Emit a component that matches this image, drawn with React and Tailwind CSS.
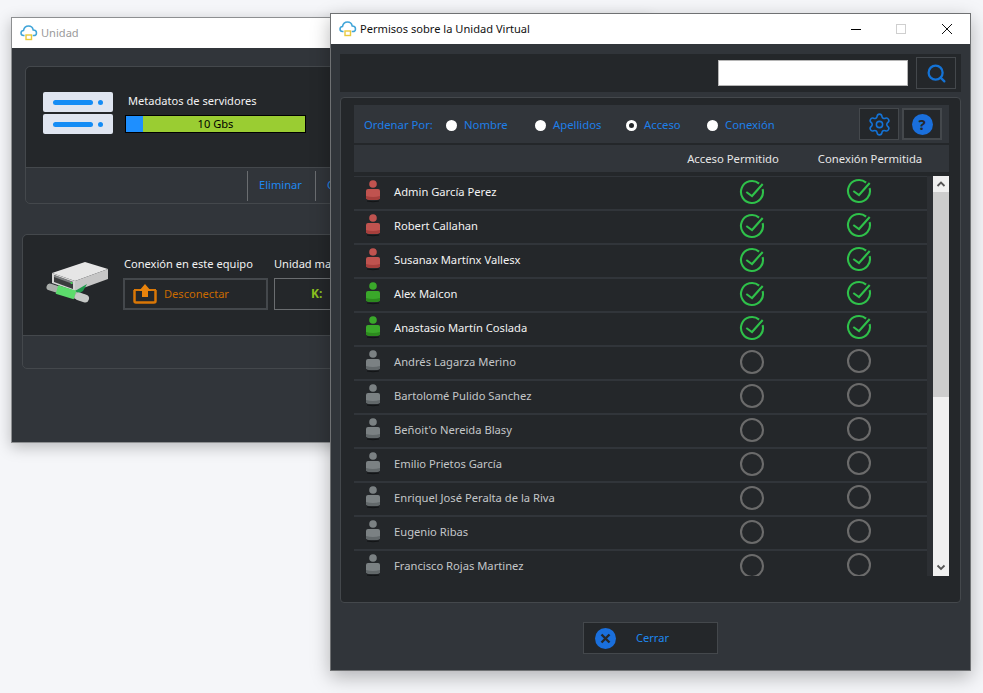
import React from 'react';
import { Search, Settings } from 'lucide-react';

const users = [
  { name: 'Admin García Perez', color: 'red', on: true },
  { name: 'Robert Callahan', color: 'red', on: true },
  { name: 'Susanax Martínx Vallesx', color: 'red', on: true },
  { name: 'Alex Malcon', color: 'green', on: true },
  { name: 'Anastasio Martín Coslada', color: 'green', on: true },
  { name: 'Andrés Lagarza Merino', color: 'gray', on: false },
  { name: 'Bartolomé Pulido Sanchez', color: 'gray', on: false },
  { name: "Beñoit'o Nereida Blasy", color: 'gray', on: false },
  { name: 'Emilio Prietos García', color: 'gray', on: false },
  { name: 'Enriquel José Peralta de la Riva', color: 'gray', on: false },
  { name: 'Eugenio Ribas', color: 'gray', on: false },
  { name: 'Francisco Rojas Martinez', color: 'gray', on: false },
];

const personColors = {
  red: ['#c0534f', '#a63f3c'],
  green: ['#3aa82a', '#2c8a1e'],
  gray: ['#7b8183', '#62686a'],
};

const radios = [
  { label: 'Nombre', width: 'w-[89px]' },
  { label: 'Apellidos', width: 'w-[91px]' },
  { label: 'Acceso', width: 'w-[81px]', selected: true },
  { label: 'Conexión', width: 'w-[80px]' },
];

const CloudLogo = () => (
  <svg width="18" height="16" viewBox="0 0 18 16" fill="none">
    <path d="M4.500 10.500H3.600C2 10.500 1 9.300 1 8c0-1.300 1-2.400 2.500-2.500C4 3 6 1 8.500 1c2.400 0 4.300 1.700 4.700 4 1.900 0 3.300 1.300 3.300 2.900 0 1.500-1.200 2.600-2.800 2.600h-1" stroke="#3fa4d8" strokeWidth="1.500" />
    <rect x="6" y="10" width="5.500" height="4.500" fill="#fff" stroke="#e8c93c" strokeWidth="1.400" />
  </svg>
);

const ServerIcon = () => (
  <div className="flex flex-col gap-[2px]">
    {[0, 1].map((i) => (
      <div key={i} className="flex h-[20px] w-[70px] items-center rounded-[2px] bg-[#dfe5f0] pl-[10px]">
        <div className="h-[5px] w-[40px] rounded-full bg-[#148cf5]" />
        <div className="ml-[5px] h-[5px] w-[5px] rounded-full bg-[#148cf5]" />
      </div>
    ))}
  </div>
);

const DriveIcon = () => (
  <svg width="66" height="44" viewBox="0 0 66 44" className="shrink-0">
    <path d="M7 13 L40 2 L63 9 L30 21 Z" fill="#e6e6e6" />
    <path d="M30 21 L63 9 V19 L30 31 Z" fill="#c6c6c6" />
    <path d="M7 13 L30 21 V31 L7 23 Z" fill="#d4d4d4" />
    <path d="M9 15 L28 22 V29 L9 22 Z" fill="#3a3c3d" />
    <path d="M9 15 L28 22 V24 L9 17 Z" fill="#7e8182" />
    <circle cx="26.500" cy="23" r="1" fill="#3cdc50" />
    <path d="M30 31 L42 24 L38 31 L30 36 Z" fill="#1f9a4c" />
    <path d="M5 27 L39 38" stroke="#a9adaa" strokeWidth="7" strokeLinecap="round" />
    <path d="M12 29.500 L30 35" stroke="#5cdc6c" strokeWidth="9" />
    <path d="M34 36.500 L40 38.500" stroke="#c6c9c7" strokeWidth="8" strokeLinecap="round" />
  </svg>
);

const UploadIcon = () => (
  <svg width="24" height="20" viewBox="0 0 24 20" fill="none" className="shrink-0">
    <path d="M1.500 6 V17 Q1.500 18.500 3 18.500 H21 Q22.500 18.500 22.500 17 V6" stroke="#d97706" strokeWidth="2.500" />
    <path d="M1 6 H8" stroke="#d97706" strokeWidth="2" />
    <path d="M16 6 H23" stroke="#d97706" strokeWidth="2" />
    <path d="M12 0 L18 7 H15 V13 H9 V7 H6 Z" fill="#e8830c" />
  </svg>
);

const Person = ({ color }) => {
  const [top, bottom] = personColors[color];
  return (
    <svg width="16" height="24" viewBox="0 0 16 24" className="-mt-[4px] shrink-0">
      <circle cx="8" cy="5" r="3.800" fill={top} />
      <path d="M1 12 Q1 10 3 10 H13 Q15 10 15 12 V19 Q15 21 8 21 Q1 21 1 19 Z" fill={top} />
      <path d="M1 17 V19 Q1 21 8 21 Q15 21 15 19 V17 Q8 19 1 17 Z" fill={bottom} />
      <path d="M2 22 Q8 23.500 14 22" stroke="#111315" strokeWidth="1" fill="none" />
    </svg>
  );
};

const Mark = ({ on }) =>
  on ? (
    <svg width="26" height="26" viewBox="0 0 26 26" fill="none" className="shrink-0">
      <path d="M20.100 4.600 A11 11 0 1 0 23.600 10.100" stroke="#2fc14a" strokeWidth="2.100" />
      <path d="M7.300 13 L13 17 L23.700 5" stroke="#2fc14a" strokeWidth="2.100" />
    </svg>
  ) : (
    <svg width="26" height="26" viewBox="0 0 26 26" fill="none" className="shrink-0">
      <circle cx="13" cy="13" r="11" stroke="#6b6b6b" strokeWidth="2.100" />
    </svg>
  );

const Row = ({ user }) => (
  <div className="mb-[2px] flex h-[32px] shrink-0 items-center bg-[#24272a] pl-[11px]">
    <Person color={user.color} />
    <span className={`ml-[13px] pb-[1px] text-[11.200px] ${user.on ? 'text-[#f2f2f2]' : 'text-[#c3c6c8]'}`}>{user.name}</span>
    <div className="ml-auto flex items-center gap-[81px] pr-[55px]">
      <div className="-mt-[2px]">
        <Mark on={user.on} />
      </div>
      <div className="-mt-[4px]">
        <Mark on={user.on} />
      </div>
    </div>
  </div>
);

const Scrollbar = () => (
  <div className="flex h-full w-[16px] shrink-0 flex-col items-center bg-[#f0f0f0]">
    <svg width="16" height="16" viewBox="0 0 16 16" fill="none" className="shrink-0">
      <path d="M4.500 10 L8 6.500 L11.500 10" stroke="#555" strokeWidth="1.800" />
    </svg>
    <div className="h-[205px] w-full bg-[#cdcdcd]" />
    <div className="flex-1" />
    <svg width="16" height="17" viewBox="0 0 16 17" fill="none" className="shrink-0">
      <path d="M4.500 6.500 L8 10 L11.500 6.500" stroke="#555" strokeWidth="1.800" />
    </svg>
  </div>
);

const App = () => {
  return (
    <div className="relative h-[693px] w-full overflow-hidden bg-[#f5f6f9] font-['Noto_Sans',sans-serif]">
      {/* back window */}
      <div className="absolute left-[11px] top-[17px] flex h-[426px] w-[640px] flex-col border border-[#8d8f91] bg-[#31353a] shadow-[0_4px_14px_rgba(0,0,0,0.25)]">
        <div className="flex h-[30px] shrink-0 items-center gap-[3px] bg-white pl-[8px]">
          <CloudLogo />
          <span className="text-[11.100px] text-[#9a9a9a]">Unidad</span>
        </div>

        <div className="ml-[13px] mt-[18px] h-[138px] rounded-[5px] border border-[#44484c] bg-[#31353a]">
          <div className="flex h-[101px] rounded-t-[5px] border-b border-[#44484c] bg-[#24272a] pl-[17px] pt-[25px]">
            <ServerIcon />
            <div className="ml-[12px]">
              <div className="ml-[3px] text-[11.100px] leading-[18px] text-[#f2f2f2]">Metadatos de servidores</div>
              <div className="mt-[5px] flex h-[18px] w-[181px] border border-black bg-[#9acd32]">
                <div className="w-[17px] bg-[#1e8fff]" />
                <div className="flex-1 pr-[17px] text-center text-[11.100px] leading-[16px] text-black">10 Gbs</div>
              </div>
            </div>
          </div>
          <div className="flex h-[35px] items-center pl-[221px]">
            <div className="flex h-[30px] w-[68px] items-center border-l border-[#6a6d70] pl-[11px] text-[11.100px] text-[#1e88f0]">Eliminar</div>
            <div className="flex h-[30px] items-center border-l border-[#6a6d70] pl-[11px] text-[11.100px] text-[#1e88f0]">Cambiar</div>
          </div>
        </div>

        <div className="ml-[10px] mt-[30px] h-[135px] rounded-[5px] border border-[#44484c] bg-[#31353a]">
          <div className="flex h-[101px] rounded-t-[5px] border-b border-[#44484c] bg-[#24272a] pl-[22px] pt-[25px]">
            <DriveIcon />
            <div className="ml-[12px] -mt-[5px]">
              <div className="ml-[1px] text-[11.100px] leading-[18px] text-[#f2f2f2]">Conexión en este equipo</div>
              <div className="mt-[5px] flex h-[32px] w-[145px] items-center gap-[7px] border-2 border-[#44484c] pl-[8px] text-[11.100px] text-[#c96a00]">
                <UploadIcon />
                Desconectar
              </div>
            </div>
            <div className="ml-[6px] -mt-[5px]">
              <div className="text-[11.100px] leading-[18px] text-[#f2f2f2]">Unidad mapeada</div>
              <div className="mt-[5px] flex h-[32px] w-[145px] items-center border border-[#6a6d70] pl-[36px] text-[12px] font-bold text-[#8cc21f]">K:</div>
            </div>
          </div>
        </div>
      </div>

      {/* front window */}
      <div className="absolute left-[330px] top-[13px] flex h-[658px] w-[641px] flex-col border border-[#6f7173] bg-[#31353a] shadow-[0_6px_18px_rgba(0,0,0,0.28)]">
        <div className="flex h-[30px] shrink-0 items-center bg-white pl-[8px]">
          <CloudLogo />
          <span className="ml-[3px] text-[11.100px] text-[#111]">Permisos sobre la Unidad Virtual</span>
          <div className="ml-auto flex items-center">
            <div className="h-[1px] w-[10px] bg-black" />
            <div className="ml-[35px] h-[10px] w-[10px] border border-[#cfcfcf]" />
            <svg width="12" height="12" viewBox="0 0 12 12" className="ml-[35px] mr-[17px]">
              <path d="M1 1 L11 11 M11 1 L1 11" stroke="#111" strokeWidth="1" />
            </svg>
          </div>
        </div>

        <div className="mx-[9px] mt-[10px] flex h-[38px] shrink-0 items-center justify-end bg-[#24272a] pr-[5px]">
          <div className="h-[26px] w-[190px] border border-[#b5b5b5] bg-white" />
          <button className="ml-[8px] flex h-[32px] w-[40px] items-center justify-center border border-[#44484c]">
            <Search size={21} color="#1473d6" strokeWidth={2.6} />
          </button>
        </div>

        <div className="mx-[9px] mt-[5px] flex h-[506px] shrink-0 flex-col rounded-[4px] border border-[#44484c] bg-[#24272a] pl-[13px] pr-[11px] pt-[7px]">
          <div className="flex h-[38px] shrink-0 items-center bg-[#31353a] pl-[10px] text-[11.300px] text-[#1e7fe8]">
            <span className="w-[82px] pt-[2px]">Ordenar Por:</span>
            {radios.map((r) => (
              <div key={r.label} className={`flex items-center pt-[2px] ${r.width}`}>
                <span className={`h-[11px] w-[11px] rounded-full ${r.selected ? 'border-[3px] border-white bg-[#24272a]' : 'bg-white'}`} />
                <span className="ml-[7px]">{r.label}</span>
              </div>
            ))}
            <button className="ml-auto flex h-[32px] w-[40px] items-center justify-center border border-[#44484c] bg-[#24272a]">
              <Settings size={25} color="#1473d6" strokeWidth={1.5} />
            </button>
            <button className="ml-[3px] mr-[7px] flex h-[32px] w-[40px] items-center justify-center border-2 border-[#44484c] bg-[#24272a]">
              <span className="flex h-[21px] w-[21px] items-center justify-center rounded-full bg-[#1a6fdc] text-[15px] font-bold leading-none text-[#24272a]">?</span>
            </button>
          </div>
          <div className="mt-[2px] flex h-[27px] shrink-0 items-center justify-end gap-[7px] bg-[#31353a] pr-[14px] pt-[1px] text-[11.300px] text-[#e6e6e6]">
            <span className="w-[130px] text-center">Acceso Permitido</span>
            <span className="w-[130px] text-center">Conexión Permitida</span>
          </div>
          <div className="mt-[4px] flex h-[400px] shrink-0 overflow-hidden">
            <div className="flex w-[573px] flex-col bg-[#31353a] pt-[1px]">
              {users.map((u) => (
                <Row key={u.name} user={u} />
              ))}
            </div>
            <div className="w-[6px] bg-[#2c2f33]" />
            <Scrollbar />
          </div>
        </div>

        <div className="flex flex-1 items-start pl-[252px] pt-[19px]">
          <button className="flex h-[32px] w-[135px] items-center border border-[#44484c] bg-[#24272a] pl-[11px] text-[11.100px] text-[#1e88f0]">
            <span className="flex h-[21px] w-[21px] items-center justify-center rounded-full bg-[#1a6fdc]">
              <svg width="11" height="11" viewBox="0 0 11 11">
                <path d="M1.500 1.500 L9.500 9.500 M9.500 1.500 L1.500 9.500" stroke="#24272a" strokeWidth="2.400" />
              </svg>
            </span>
            <span className="ml-[20px]">Cerrar</span>
          </button>
        </div>
      </div>
    </div>
  );
};

export default App;
